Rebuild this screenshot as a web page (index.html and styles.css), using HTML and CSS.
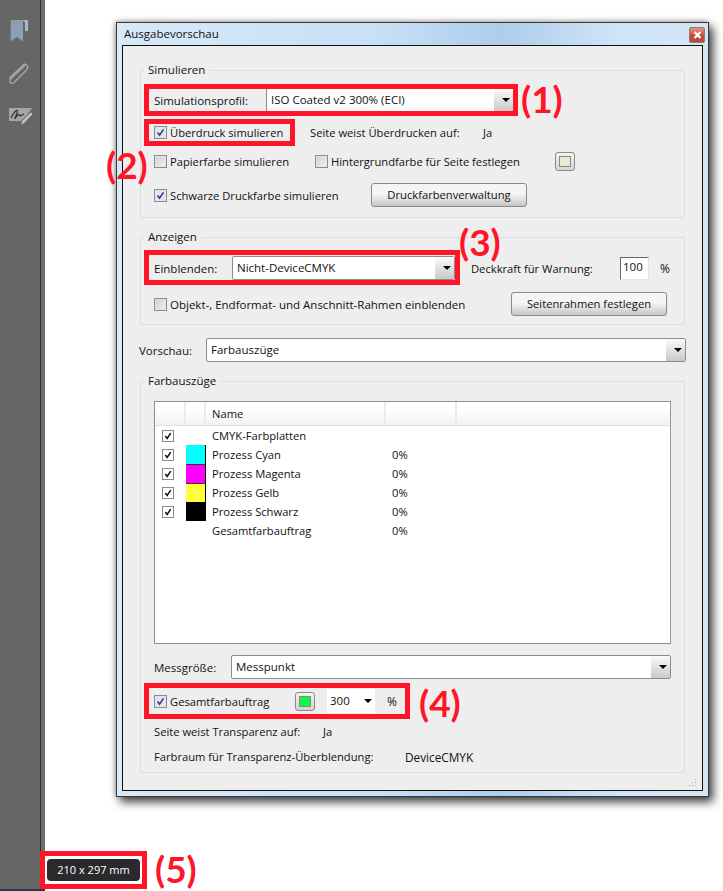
FILE: index.html
```html
<!DOCTYPE html>
<html lang="de">
<head>
<meta charset="utf-8">
<title>Ausgabevorschau</title>
<link rel="stylesheet" href="styles.css">
</head>
<body>
<svg class="defs" width="0" height="0" aria-hidden="true">
  <symbol id="tick" viewBox="0 0 13 13"><path d="M3 6.500 L5.400 9.600 L10 2.800" fill="none" stroke="currentColor" stroke-width="2"/></symbol>
</svg>
<div class="app">
  <aside class="sidebar">
    <svg class="navicon nav-book" width="22" height="24" viewBox="0 0 22 24"><path d="M14 2H20V13H17V5C17 3.500 15.500 3 14 3Z" fill="#a9b8c6"/><path d="M2.700 2H15V23.500L9 19L2.700 23.500Z" fill="#8c9fb2"/></svg>
    <svg class="navicon nav-clip" width="24" height="24" viewBox="0 0 24 24"><path d="M20 3.500L6 16.500C3 19.500 6 23 9 20.500L22 7.500C24 4 20.500 0.800 18 3.200L4.500 16" transform="translate(-1 0)" fill="none" stroke="#a8a8a8" stroke-width="1.300"/></svg>
    <svg class="navicon nav-sign" width="24" height="20" viewBox="0 0 24 20"><path d="M1 2H24L19 9L13 15H1Z" fill="#a5a5a5"/><path d="M3 12C6 6 9 3 9.500 5C9.500 8 6 13 7 12.500C9 10 11 7 11.500 9C12 11 14 9 16 8" fill="none" stroke="#333" stroke-width="1.200"/><path d="M14 15L23 6L25 8L15.500 18L13 18.500Z" fill="#c4c4c4" stroke="#666" stroke-width=".6"/></svg>
  </aside>

  <section class="dialog">
    <header class="titlebar">
      <span class="title">Ausgabevorschau</span>
      <span class="close"><svg width="9" height="8" viewBox="0 0 9 8"><path d="M1.500 1L7.500 7M7.500 1L1.500 7" stroke="#fff" stroke-width="2.200"/></svg></span>
    </header>
    <div class="client">
      <fieldset class="group group-sim">
        <legend>Simulieren</legend>
        <div class="row r-profile">
          <label class="lab lab-profile">Simulationsprofil:</label>
          <div class="select s-profile"><span>ISO Coated v2 300% (ECI)</span><i class="drop"></i></div>
        </div>
        <div class="row r-over">
          <span class="check on"><svg><use href="#tick"/></svg></span><span class="ct c-over">Überdruck simulieren</span>
          <span class="ct t-seite">Seite weist Überdrucken auf:</span><span class="ct t-ja">Ja</span>
        </div>
        <div class="row r-paper">
          <span class="check"></span><span class="ct c-paper">Papierfarbe simulieren</span>
          <span class="check"></span><span class="ct c-bg">Hintergrundfarbe für Seite festlegen</span>
          <span class="swatch sw-bg"><i></i></span>
        </div>
        <div class="row r-black">
          <span class="check on"><svg><use href="#tick"/></svg></span><span class="ct c-black">Schwarze Druckfarbe simulieren</span>
          <span class="button b-ink">Druckfarbenverwaltung</span>
        </div>
      </fieldset>

      <fieldset class="group group-show">
        <legend>Anzeigen</legend>
        <div class="row r-einb">
          <label class="lab lab-einb">Einblenden:</label>
          <div class="select s-einb"><span>Nicht-DeviceCMYK</span><i class="drop"></i></div>
          <span class="ct t-deck">Deckkraft für Warnung:</span>
          <span class="input">100</span>
          <span class="ct t-pct">%</span>
        </div>
        <div class="row r-obj">
          <span class="check"></span><span class="ct c-obj">Objekt-, Endformat- und Anschnitt-Rahmen einblenden</span>
          <span class="button b-frame">Seitenrahmen festlegen</span>
        </div>
      </fieldset>

      <div class="row r-vor">
        <label class="lab lab-vor">Vorschau:</label>
        <div class="select s-vor"><span>Farbauszüge</span><i class="drop"></i></div>
      </div>

      <fieldset class="group group-sep">
        <legend>Farbauszüge</legend>
        <div class="list">
          <div class="list-head"><span class="h1"></span><span class="h2"></span><span class="h3">Name</span><span class="h4"></span><span class="h5"></span></div>
          <div class="list-row"><span class="mini"><svg><use href="#tick"/></svg></span><span class="col"></span><span>CMYK-Farbplatten</span></div>
          <div class="list-row"><span class="mini"><svg><use href="#tick"/></svg></span><span class="col cyan"></span><span>Prozess Cyan</span><span>0%</span></div>
          <div class="list-row"><span class="mini"><svg><use href="#tick"/></svg></span><span class="col magenta"></span><span>Prozess Magenta</span><span>0%</span></div>
          <div class="list-row"><span class="mini"><svg><use href="#tick"/></svg></span><span class="col yellow"></span><span>Prozess Gelb</span><span>0%</span></div>
          <div class="list-row"><span class="mini"><svg><use href="#tick"/></svg></span><span class="col black"></span><span>Prozess Schwarz</span><span>0%</span></div>
          <div class="list-row"><span></span><span class="col"></span><span>Gesamtfarbauftrag</span><span>0%</span></div>
        </div>
        <div class="row r-mess">
          <label class="lab lab-mess">Messgröße:</label>
          <div class="select s-mess"><span>Messpunkt</span><i class="drop"></i></div>
        </div>
        <div class="row r-total">
          <span class="check on"><svg><use href="#tick"/></svg></span><span class="ct c-total">Gesamtfarbauftrag</span>
          <span class="swatch sw-green"><i></i></span>
          <span class="mini-select">300<i class="drop-arrow"></i></span>
          <span class="ct t-pct2">%</span>
        </div>
        <div class="row r-trans"><span class="ct t-trans">Seite weist Transparenz auf:</span><span class="ct">Ja</span></div>
        <div class="row r-space"><span class="ct t-space">Farbraum für Transparenz-Überblendung:</span><span class="ct t-dev">DeviceCMYK</span></div>
      </fieldset>
      <svg class="grip" width="9" height="9" viewBox="0 0 9 9"><path d="M7 1h1v1H7zM4 4h1v1H4zM7 4h1v1H7zM1 7h1v1H1zM4 7h1v1H4zM7 7h1v1H7z" fill="#aaa"/></svg>
    </div>
  </section>

  <div class="mark m1"></div>
  <div class="mark m2"></div>
  <div class="mark m3"></div>
  <div class="mark m4"></div>
  <div class="mark m5"><span class="badge">210 x 297 mm</span></div>
  <span class="num n1">(1)</span>
  <span class="num n2">(2)</span>
  <span class="num n3">(3)</span>
  <span class="num n4">(4)</span>
  <span class="num n5">(5)</span>
</div>
</body>
</html>
```
FILE: styles.css
```css
* { box-sizing: border-box; }
html, body { margin: 0; height: 891px; overflow: hidden; background: #fff; }
body { font: 11.200px/16px "Open Sans", "Noto Sans", sans-serif; color: #111; }
.defs { position: absolute; }
.app { position: relative; width: 723px; height: 891px; }

.sidebar {
  width: 45px; height: 891px; padding: 18px 0 0 8px;
  display: flex; flex-direction: column; gap: 20px;
  background: linear-gradient(to right, #666 40px, #2e2e2e 40px, #2e2e2e 41.500px, #6e6e6e 41.500px);
  border-bottom: 2px solid #2a3a44;
}
.navicon { display: block; }
.nav-clip { margin-left: -2px; }

.dialog {
  position: absolute; left: 116px; top: 22px; width: 593px; height: 775px;
  border: 1px solid #39393b; padding: 0 5px 5px;
  background: linear-gradient(90deg, #d8e9f8, #c6e0f6 45%, #aecde9 65%, #cfe5f9 85%, #d6e6f5);
  box-shadow: 4px 5px 9px rgba(0, 0, 0, .75), -1px -1px 5px rgba(0, 0, 0, .3);
  display: flex; flex-direction: column;
}
.titlebar { height: 22px; display: flex; align-items: center; justify-content: space-between; flex: none; }
.title { margin: 0 0 0 2px; font-size: 11.500px; color: #111; }
.close {
  width: 16px; height: 16px; margin: 2px -2px 0 0; display: flex; align-items: center; justify-content: center;
  background: linear-gradient(#e09a8a, #c8483a 55%, #b9483a); border: 1px solid #8b7a78; border-radius: 2px;
}
.client {
  position: relative; flex: 1; background: #eee; border: 1px solid #111;
  padding: 16px 17px 0 17px;
}
.grip { position: absolute; right: 5px; bottom: 3px; }

.group {
  margin: 0; padding: 0 13px; min-width: 0;
  border: 1px solid #d8dfe3; border-radius: 2px;
}
.group legend { margin-left: -10px; padding: 0 4px; height: 16px; line-height: 16px; font-size: 11.500px; }
.group-sim { height: 156px; }
.group-show { height: 96px; margin-top: 11px; }
.group-sep { height: 400px; margin-top: 11px; }

.row { display: flex; align-items: center; }
.lab, .ct { margin-top: 2px; flex: none; }
.lab { font-size: 11.500px; }
.r-profile { height: 24px; margin-top: 10px; }
.lab-profile { width: 112px; }
.s-profile { width: 248px; }
.r-over { height: 18px; margin-top: 11px; }
.c-over { width: 140px; }
.t-seite { width: 173px; }
.r-paper { height: 18px; margin-top: 11px; }
.c-paper { width: 145px; }
.c-bg { width: 224px; }
.r-black { height: 24px; margin-top: 13px; }
.c-black { width: 201px; }
.b-ink { width: 156px; }

.r-einb { height: 24px; margin-top: 11px; }
.lab-einb { width: 78px; }
.s-einb { width: 223px; }
.t-deck { margin-left: 16px; width: 149px; }
.t-pct { margin-left: 11px; font-size: 12px; }
.r-obj { height: 24px; margin-top: 12px; }
.c-obj { width: 341px; font-size: 11.500px; }
.b-frame { width: 156px; }

.r-vor { height: 24px; margin-top: 13px; }
.lab-vor { width: 67px; margin-left: -1px; }
.s-vor { width: 480px; }

.list { height: 243px; margin-top: 12px; width: 517px; background: #fff; border: 1px solid #8e8e8e; border-right-color: #999; }
.list-head { height: 24px; display: grid; grid-template-columns: 31px 20px 180px 71px 1fr; background: linear-gradient(#fff 30%, #f1f2f4); border-bottom: 1px solid #dcdfe3; }
.list-head span { border-right: 2px solid #e9ecef; display: flex; align-items: center; padding-left: 6px; }
.list-head .h5 { border: 0; }
.list-row { height: 19px; display: grid; grid-template-columns: 31px 20px 180px 1fr; align-items: center; }
.list-row .col { height: 19px; padding-left: 0; }
.list-row span:nth-child(3) { padding-left: 6px; }
.list-row span:nth-child(4) { padding-left: 6px; }
.mini { width: 12px; height: 12px; margin-left: 7px; border: 1px solid #8a8a8a; background: #fff; color: #111; display: block; }
.mini svg { display: block; width: 10px; height: 10px; }
.cyan { background: #0ff; border-right: 1px solid #000; }
.magenta { background: #f0f; border-right: 1px solid #000; border-top: 1px solid #333; }
.yellow { background: #ffff3c; border-right: 1px solid #000; border-top: 1px solid #333; }
.black { background: #000; }

.r-mess { height: 24px; margin-top: 11px; }
.lab-mess { width: 77px; }
.s-mess { width: 440px; }
.s-mess span { margin-top: -3px; }
.r-total { height: 24px; margin-top: 10px; }
.c-total { width: 125px; }
.mini-select { width: 48px; height: 24px; padding-left: 3px; background: #fff; display: flex; align-items: center; justify-content: space-between; font-size: 11.500px; }
.drop-arrow { width: 0; height: 0; margin-right: 3px; border: 4px solid transparent; border-top-color: #000; border-bottom: 0; }
.t-pct2 { margin-left: 12px; font-size: 12px; }
.r-trans { height: 16px; margin-top: 10px; }
.t-trans { width: 169px; }
.r-space { height: 16px; margin-top: 9px; }
.t-space { width: 251px; }
.t-dev { font-size: 11.800px; }

.check {
  flex: none; width: 13px; height: 13px; margin-right: 3px;
  border: 1px solid #8c8c8c; background: linear-gradient(135deg, #cfcfcf, #f2f2f2); box-shadow: inset 0 0 0 1px #e4e4e4;
  color: #33437f; display: block;
}
.check svg { display: block; width: 11px; height: 11px; }
.check.on { background: #dfe5f1; }

.select {
  flex: none; height: 24px; position: relative; padding: 0 0 0 4px; display: flex; align-items: center;
  background: #fff; border: 1px solid #8c8c8c; border-radius: 2px; font-size: 11.500px;
}
.select span { margin-top: -1px; }
.drop {
  position: absolute; right: 0; top: 0; bottom: 0; width: 19px;
  background: linear-gradient(#fafafa, #c9c9c9);
}
.drop::after {
  content: ""; position: absolute; left: 8px; top: 9px;
  border: 4px solid transparent; border-top-color: #000; border-bottom: 0;
}
.button {
  flex: none; height: 24px; display: flex; align-items: center; justify-content: center;
  border: 1px solid #8a8a8a; border-radius: 3px; background: linear-gradient(#f5f5f5 45%, #c6c6c6);
}
.swatch {
  flex: none; width: 20px; height: 19px; padding: 3px; border: 1px solid #8a8a8a; border-radius: 3px;
  background: linear-gradient(#f4f4f4, #d4d4d4);
}
.swatch i { display: block; height: 100%; background: #ede9d3; border: 1px solid #888; }
.swatch.sw-green { margin-right: 12px; }
.swatch.sw-green i { background: #0dfa43; }
.input { width: 29px; height: 23px; padding: 0 0 2px 2px; background: #fff; border: 1px solid; border-color: #666 #e6e6e6 #e6e6e6 #666; display: flex; align-items: center; font-size: 11.500px; }

.mark { position: absolute; border: 5px solid #ff1428; }
.m1 { left: 144px; top: 84px; width: 374px; height: 32px; }
.m2 { left: 144px; top: 119px; width: 151px; height: 27px; }
.m3 { left: 144px; top: 250px; width: 316px; height: 35px; }
.m4 { left: 144px; top: 683px; width: 266px; height: 36px; }
.m5 { left: 40px; top: 851px; width: 107px; height: 38px; padding: 3px 2px; background: #fff; }
.badge { display: block; height: 22px; line-height: 22px; text-align: center; color: #fff; background: #2a2a2c; border-radius: 4px; font-size: 11px; }

.num { position: absolute; font: 700 37px/36px Lato, "Open Sans", sans-serif; color: #ff1428; white-space: nowrap; }
.n1 { left: 521px; top: 81px; }
.n2 { left: 106px; top: 147px; }
.n3 { left: 459px; top: 224px; }
.n4 { left: 419px; top: 685px; }
.n5 { left: 155px; top: 851px; }
```
